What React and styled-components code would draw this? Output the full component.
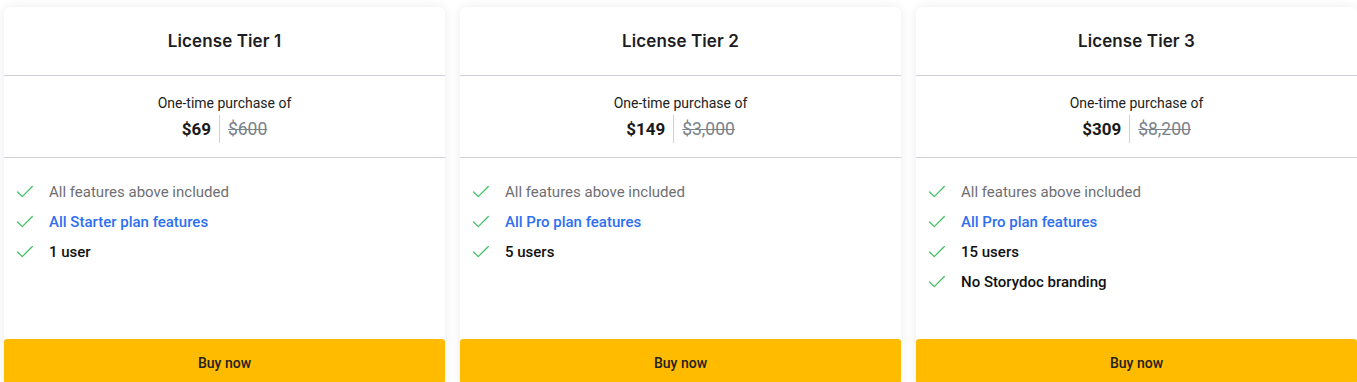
import React from 'react'
import styled, { createGlobalStyle } from 'styled-components'
import { Check } from 'lucide-react'

const GlobalStyle = createGlobalStyle`
  html, body {
    margin: 0;
    padding: 0;
    background: #ffffff;
    overflow: hidden;
  }
  body {
    font-family: Roboto, "Liberation Sans", Arial, sans-serif;
  }
`

const tiers = [
  {
    name: 'License Tier 1',
    price: '$69',
    was: '$600',
    plan: 'All Starter plan features',
    extras: ['1 user'],
  },
  {
    name: 'License Tier 2',
    price: '$149',
    was: '$3,000',
    plan: 'All Pro plan features',
    extras: ['5 users'],
  },
  {
    name: 'License Tier 3',
    price: '$309',
    was: '$8,200',
    plan: 'All Pro plan features',
    extras: ['15 users', 'No Storydoc branding'],
  },
]

const Grid = styled.div`
  display: grid;
  grid-template-columns: repeat(3, 441px);
  gap: 15px;
  padding: 7px 0 0 4px;
  width: max-content;
`

const Card = styled.div`
  display: flex;
  flex-direction: column;
  height: 380px;
  background: #fff;
  border-radius: 6px;
  box-shadow: 0 0 12px rgba(0, 0, 0, 0.08);
  overflow: hidden;
`

const Header = styled.div`
  height: 68px;
  display: flex;
  align-items: center;
  justify-content: center;
  border-bottom: 1px solid #cfd2d8;
`

const Title = styled.h2`
  margin: 0;
  font-family: Inter, Roboto, sans-serif;
  font-size: 17px;
  font-weight: 600;
  color: #1d1d1f;
  letter-spacing: 0.1px;
`

const PriceBox = styled.div`
  height: 82px;
  display: flex;
  flex-direction: column;
  align-items: center;
  padding-top: 18px;
  box-sizing: border-box;
  border-bottom: 1px solid #cfd2d8;
`

const Caption = styled.div`
  font-size: 14px;
  color: #222;
  line-height: 18px;
`

const PriceRow = styled.div`
  display: flex;
  align-items: center;
  margin-top: 3px;
`

const Price = styled.span`
  font-size: 17px;
  font-weight: 700;
  color: #1a1a1a;
  padding-right: 8px;
  line-height: 28px;
`

const OldPrice = styled.span`
  font-size: 17.5px;
  color: #7a828c;
  text-decoration: line-through;
  padding-left: 8px;
  border-left: 1px solid #cfd2d8;
  line-height: 28px;
`

const Features = styled.ul`
  flex: 1;
  list-style: none;
  margin: 0;
  padding: 24px 0 0 10px;
  display: flex;
  flex-direction: column;
  gap: 10px;
`

const Feature = styled.li`
  display: flex;
  align-items: center;
  gap: 13px;
  height: 20px;
  font-size: 15px;
  font-weight: ${p => (p.$tone === 'muted' ? 400 : 500)};
  color: ${p =>
    p.$tone === 'muted' ? '#6e6e73' : p.$tone === 'link' ? '#2d6ff0' : '#111'};
  svg {
    flex: none;
    color: #3dbf62;
  }
`

const BuyButton = styled.button`
  height: 48px;
  border: 0;
  border-radius: 3px 3px 0 0;
  background: #ffbb00;
  color: #222;
  font-family: Roboto, sans-serif;
  font-size: 14px;
  font-weight: 500;
  padding-bottom: 2px;
  cursor: pointer;
`

const Tier = ({ tier }) => (
  <Card>
    <Header>
      <Title>{tier.name}</Title>
    </Header>
    <PriceBox>
      <Caption>One-time purchase of</Caption>
      <PriceRow>
        <Price>{tier.price}</Price>
        <OldPrice>{tier.was}</OldPrice>
      </PriceRow>
    </PriceBox>
    <Features>
      <Feature $tone="muted">
        <Check size={22} strokeWidth={1.3} />
        All features above included
      </Feature>
      <Feature $tone="link">
        <Check size={22} strokeWidth={1.3} />
        {tier.plan}
      </Feature>
      {tier.extras.map(x => (
        <Feature key={x}>
          <Check size={22} strokeWidth={1.3} />
          {x}
        </Feature>
      ))}
    </Features>
    <BuyButton>Buy now</BuyButton>
  </Card>
)

export default function App() {
  return (
    <>
      <GlobalStyle />
      <Grid>
        {tiers.map(t => (
          <Tier key={t.name} tier={t} />
        ))}
      </Grid>
    </>
  )
}
